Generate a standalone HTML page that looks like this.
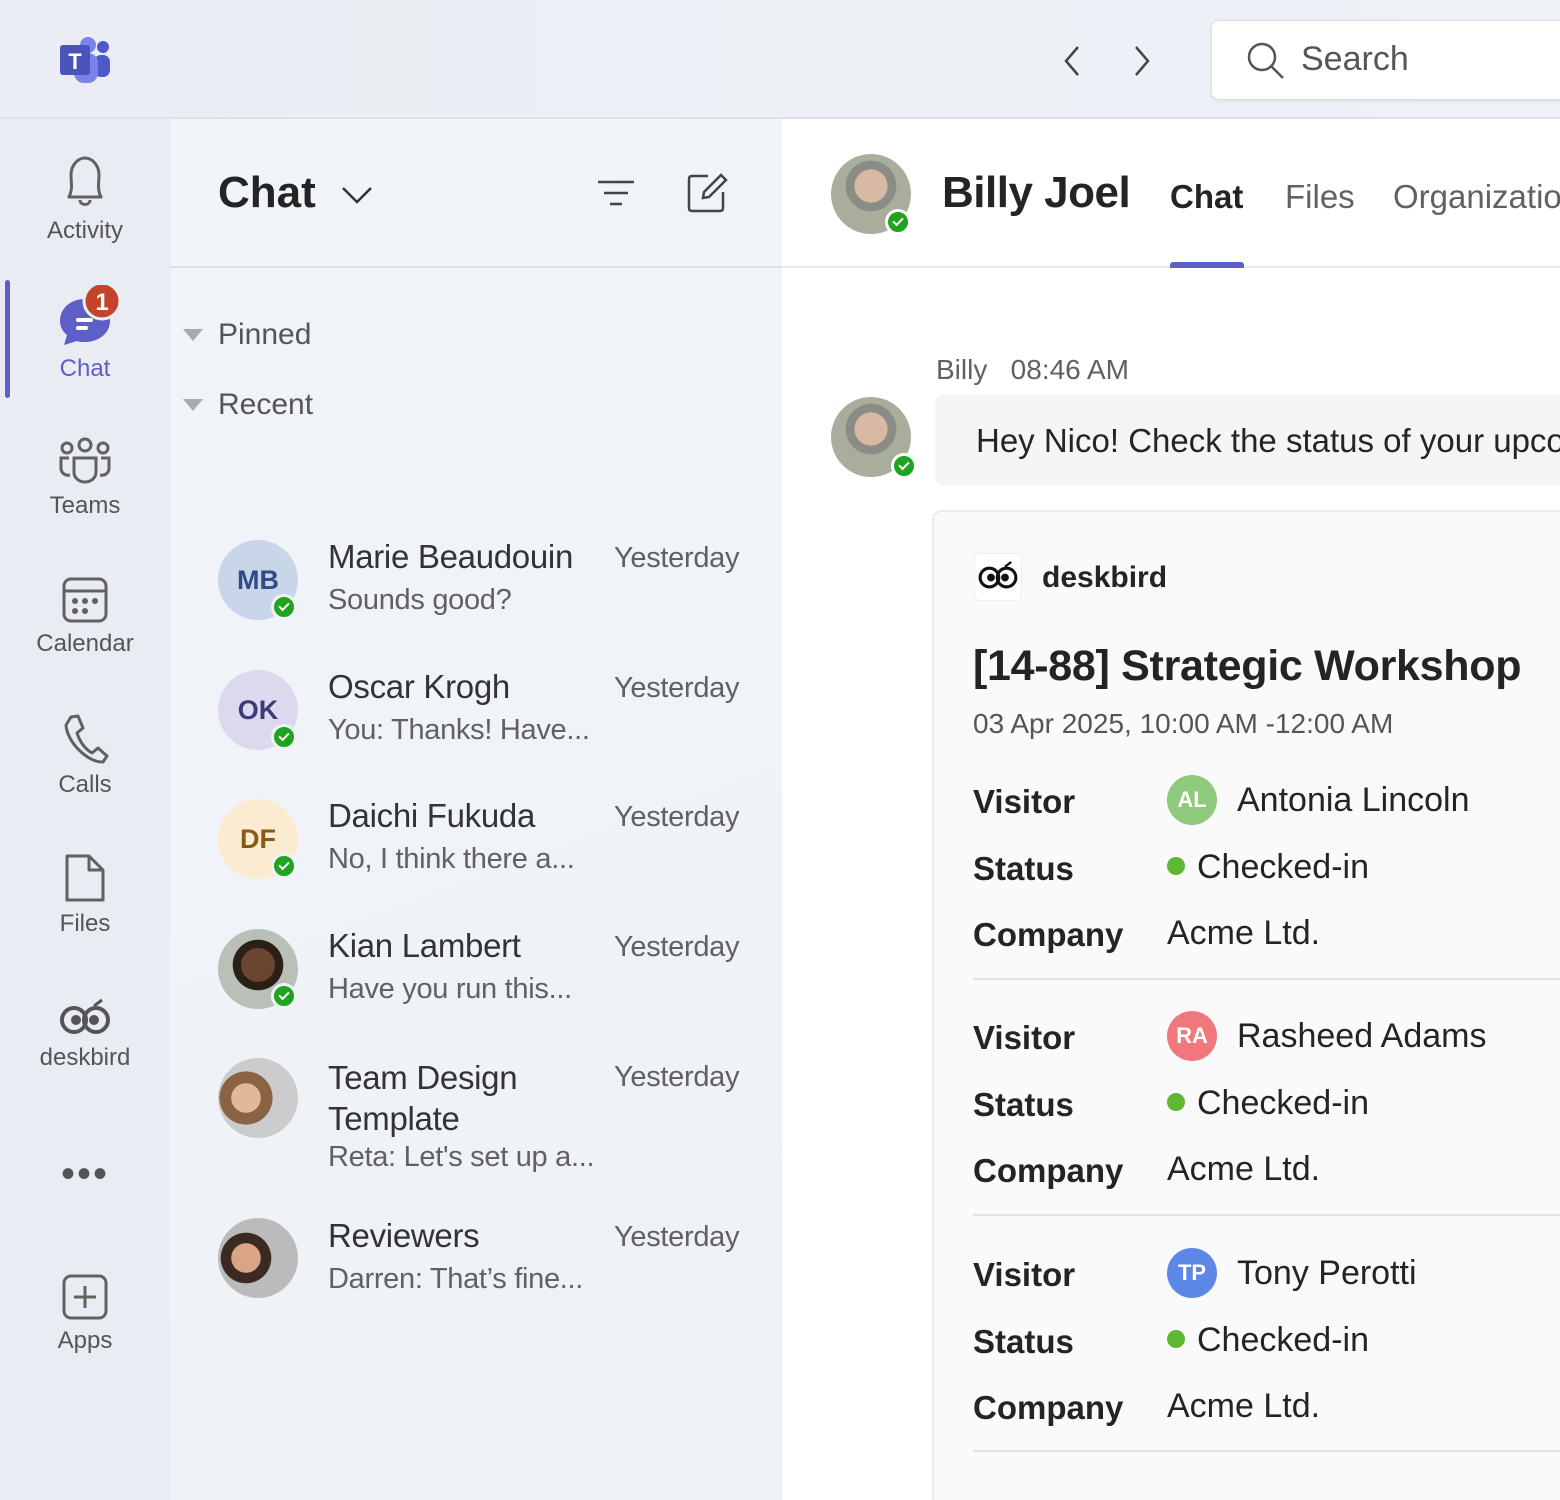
<!DOCTYPE html>
<html><head><meta charset="utf-8"><style>
*{box-sizing:border-box;margin:0;padding:0}
html,body{width:1560px;height:1500px;overflow:hidden}
body{font-family:"Segoe UI","Liberation Sans",sans-serif;background:#eef1f6;color:#242424}
#w{position:relative;width:1560px;height:1500px;overflow:hidden}
.abs{position:absolute}
.top{left:0;top:0;width:1560px;height:119px;background:linear-gradient(90deg,#eaeef4,#eef1f6);border-bottom:2px solid #dde1e8}
.rail{left:0;top:119px;width:170px;height:1381px;background:#e9edf3}
.list{left:170px;top:119px;width:612px;height:1381px;background:linear-gradient(160deg,#f1f4f8,#eef2f7)}
.main{left:782px;top:119px;width:778px;height:1381px;background:#fff}
.ri{position:absolute;left:0;width:170px;text-align:center;font-size:24px;color:#555}
.ri svg{display:block;margin:0 auto 6px}
.av{position:absolute;width:80px;height:80px;border-radius:50%;font-size:27px;font-weight:700;display:flex;align-items:center;justify-content:center}
.ok{position:absolute;width:26px;height:26px;border-radius:50%;background:#1ea41e;border:3px solid #f0f3f8;display:flex;align-items:center;justify-content:center}
.ok:after{content:"";width:8px;height:4px;border-left:2px solid #fff;border-bottom:2px solid #fff;transform:rotate(-45deg) translate(1px,-1px)}
.nm{position:absolute;left:328px;font-size:33px;color:#333;letter-spacing:-.3px}
.pv{position:absolute;left:328px;font-size:29px;color:#616161;letter-spacing:-.3px}
.yd{position:absolute;left:614px;font-size:29px;color:#616161;letter-spacing:-.3px}
.lb{position:absolute;left:973px;font-size:33px;font-weight:700;color:#242424}
.vl{position:absolute;font-size:34px;color:#242424}
.ini{position:absolute;left:1167px;width:50px;height:50px;border-radius:50%;color:#fff;font-size:22px;font-weight:700;display:flex;align-items:center;justify-content:center}
.dot{display:inline-block;width:18px;height:18px;border-radius:50%;background:#5fb832;margin-right:12px;vertical-align:middle;position:relative;top:-3px}
.hr{position:absolute;left:973px;width:587px;height:2px;background:#e3e3e3}
.face{position:absolute;width:80px;height:80px;border-radius:50%;background:radial-gradient(circle at 50% 40%,#d8b9a3 0 26%,#8c8c86 27% 40%,#a8ad9c 41%)}
</style></head><body><div id="w">
<div class="abs top"></div>
<svg class="abs" style="left:58px;top:37px" width="54" height="48" viewBox="0 0 54 48"><circle cx="30" cy="8" r="8" fill="#7b83eb"/><circle cx="45" cy="10" r="6" fill="#5059c9"/><rect x="36" y="18" width="16" height="22" rx="7" fill="#5059c9"/><rect x="16" y="16" width="24" height="30" rx="10" fill="#7b83eb"/><rect x="2" y="8" width="30" height="30" rx="3" fill="#4b53bc"/><text x="17" y="32" font-size="22" font-weight="700" fill="#fff" text-anchor="middle" font-family="Liberation Sans">T</text></svg>
<svg class="abs" style="left:1058px;top:44px" width="100" height="34"><path d="M20 3 L8 17 L20 31" fill="none" stroke="#444" stroke-width="2.5"/><path d="M78 3 L90 17 L78 31" fill="none" stroke="#444" stroke-width="2.5"/></svg>
<div class="abs" style="left:1211px;top:20px;width:349px;height:80px;background:#fff;border-radius:8px 0 0 8px;border:1px solid #e0e0e0;border-right:none;box-shadow:0 1px 3px rgba(0,0,0,.08)"></div>
<svg class="abs" style="left:1246px;top:41px" width="40" height="40"><circle cx="16" cy="16" r="13" fill="none" stroke="#555" stroke-width="2.5"/><path d="M26 26 L37 37" stroke="#555" stroke-width="2.5"/></svg>
<div class="abs" style="left:1301px;top:40px;font-size:34px;color:#555">Search</div>

<div class="abs rail"></div>
<div class="abs" style="left:5px;top:280px;width:5px;height:118px;background:#5b5fc7;border-radius:3px"></div>
<div class="ri" style="top:155px"><svg width="48" height="56" viewBox="0 0 48 56"><path d="M8 42 C12 34 10 28 10 20 C10 10 17 3 24 3 C31 3 38 10 38 20 C38 28 36 34 40 42 Z M19 45 C19 51 29 51 29 45" fill="none" stroke="#616161" stroke-width="3" stroke-linejoin="round"/></svg>Activity</div>
<div class="ri" style="top:285px;color:#5b5fc7"><svg width="70" height="64" viewBox="0 0 70 64"><path d="M35 14 C21 14 10 23 10 36 C10 42 13 47 17 50 L14 60 L27 56 C29 57 32 57 35 57 C49 57 60 48 60 36 C60 23 49 14 35 14Z" fill="#5b5fc7"/><rect x="26" y="33" width="17" height="4" rx="2" fill="#fff"/><rect x="26" y="41" width="12" height="4" rx="2" fill="#fff"/><circle cx="52" cy="16" r="18" fill="#c4432b" stroke="#e9edf3" stroke-width="3"/><text x="52" y="25" font-size="24" font-weight="700" fill="#fff" text-anchor="middle" font-family="Liberation Sans">1</text></svg>Chat</div>
<div class="ri" style="top:436px"><svg width="56" height="50" viewBox="0 0 56 50"><g fill="none" stroke="#616161" stroke-width="3"><circle cx="28" cy="9" r="6"/><circle cx="10" cy="12" r="5"/><circle cx="46" cy="12" r="5"/><path d="M17 22 H39 V36 C39 42 34 46 28 46 C22 46 17 42 17 36Z"/><path d="M12 22 H4 V32 C4 37 8 40 13 39"/><path d="M44 22 H52 V32 C52 37 48 40 43 39"/></g></svg>Teams</div>
<div class="ri" style="top:576px"><svg width="48" height="48" viewBox="0 0 48 48"><rect x="3" y="3" width="42" height="42" rx="7" fill="none" stroke="#616161" stroke-width="3"/><path d="M3 15 H45" stroke="#616161" stroke-width="3"/><g fill="#616161"><circle cx="14" cy="25" r="3"/><circle cx="24" cy="25" r="3"/><circle cx="34" cy="25" r="3"/><circle cx="14" cy="35" r="3"/><circle cx="24" cy="35" r="3"/></g></svg>Calendar</div>
<div class="ri" style="top:713px"><svg width="48" height="52" viewBox="0 0 48 52"><path d="M10 4 L17 3 L22 15 L16 20 C19 29 24 36 31 40 L37 35 L46 43 L42 49 C28 50 6 30 5 12Z" fill="none" stroke="#616161" stroke-width="3" stroke-linejoin="round"/></svg>Calls</div>
<div class="ri" style="top:852px"><svg width="44" height="52" viewBox="0 0 44 52"><path d="M4 4 H26 L40 18 V48 H4Z M26 4 V18 H40" fill="none" stroke="#616161" stroke-width="3" stroke-linejoin="round"/></svg>Files</div>
<div class="ri" style="top:998px"><svg width="54" height="40" viewBox="0 0 54 40"><circle cx="16" cy="22" r="12" fill="none" stroke="#555" stroke-width="4"/><circle cx="38" cy="22" r="12" fill="none" stroke="#555" stroke-width="4"/><circle cx="18" cy="22" r="5" fill="#555"/><circle cx="36" cy="22" r="5" fill="#555"/><path d="M36 8 L44 2" stroke="#555" stroke-width="3"/></svg>deskbird</div>
<div class="ri" style="top:1152px;font-size:40px;letter-spacing:2px;color:#555">•••</div>
<div class="ri" style="top:1273px"><svg width="48" height="48" viewBox="0 0 48 48"><rect x="3" y="3" width="42" height="42" rx="7" fill="none" stroke="#616161" stroke-width="3"/><path d="M24 13 V35 M13 24 H35" stroke="#616161" stroke-width="3"/></svg>Apps</div>

<div class="abs list"></div>
<div class="abs" style="left:170px;top:266px;width:612px;height:2px;background:#dde1e8"></div>
<div class="abs" style="left:218px;top:168px;font-size:44px;font-weight:700;color:#242424">Chat</div>
<svg class="abs" style="left:340px;top:184px" width="34" height="22"><path d="M3 4 L17 18 L31 4" fill="none" stroke="#333" stroke-width="2.5"/></svg>
<svg class="abs" style="left:596px;top:178px" width="40" height="30"><path d="M2 4 H38 M8 15 H32 M14 26 H26" stroke="#444" stroke-width="2.5"/></svg>
<svg class="abs" style="left:686px;top:172px" width="42" height="42"><path d="M22 4 H6 Q3 4 3 7 V36 Q3 39 6 39 H34 Q37 39 37 36 V20" fill="none" stroke="#444" stroke-width="2.5"/><path d="M17 26 L18 20 L35 3 L40 8 L23 25Z" fill="none" stroke="#444" stroke-width="2.5"/></svg>
<svg class="abs" style="left:183px;top:329px" width="22" height="14"><path d="M0 0 H20 L10 12Z" fill="#aaa"/></svg>
<div class="abs" style="left:218px;top:318px;font-size:30px;color:#555">Pinned</div>
<svg class="abs" style="left:183px;top:399px" width="22" height="14"><path d="M0 0 H20 L10 12Z" fill="#aaa"/></svg>
<div class="abs" style="left:218px;top:388px;font-size:30px;color:#555">Recent</div>

<div class="av" style="left:218px;top:540px;background:#c9d6ea;color:#2f4c85">MB</div><div class="ok" style="left:271px;top:594px"></div>
<div class="nm" style="top:538px">Marie Beaudouin</div><div class="yd" style="top:542px">Yesterday</div><div class="pv" style="top:584px">Sounds good?</div>
<div class="av" style="left:218px;top:670px;background:#dcd9ee;color:#3d3a7a">OK</div><div class="ok" style="left:271px;top:724px"></div>
<div class="nm" style="top:668px">Oscar Krogh</div><div class="yd" style="top:672px">Yesterday</div><div class="pv" style="top:714px">You: Thanks! Have...</div>
<div class="av" style="left:218px;top:799px;background:#fbecd1;color:#8a5a14">DF</div><div class="ok" style="left:271px;top:853px"></div>
<div class="nm" style="top:797px">Daichi Fukuda</div><div class="yd" style="top:801px">Yesterday</div><div class="pv" style="top:843px">No, I think there a...</div>
<div class="face" style="left:218px;top:929px;background:radial-gradient(circle at 50% 45%,#6b4530 0 28%,#2a2018 29% 42%,#b9c0b7 43%)"></div><div class="ok" style="left:271px;top:983px"></div>
<div class="nm" style="top:927px">Kian Lambert</div><div class="yd" style="top:931px">Yesterday</div><div class="pv" style="top:973px">Have you run this...</div>
<div class="face" style="left:218px;top:1058px;background:radial-gradient(circle at 35% 50%,#e2b89a 0 22%,#8a6244 23% 40%,#ccc 41%)"></div>
<div class="nm" style="top:1057px;line-height:41px">Team Design<br>Template</div><div class="yd" style="top:1061px">Yesterday</div><div class="pv" style="top:1141px">Reta: Let's set up a...</div>
<div class="face" style="left:218px;top:1218px;background:radial-gradient(circle at 35% 50%,#d9a585 0 22%,#3a2a22 23% 38%,#bbb 39%)"></div>
<div class="nm" style="top:1217px">Reviewers</div><div class="yd" style="top:1221px">Yesterday</div><div class="pv" style="top:1263px">Darren: That’s fine...</div>

<div class="abs main"></div>
<div class="abs" style="left:782px;top:266px;width:778px;height:2px;background:#ebebeb"></div>
<div class="face" style="left:831px;top:154px"></div><div class="ok" style="left:885px;top:209px;border-color:#fff"></div>
<div class="abs" style="left:942px;top:168px;font-size:44px;font-weight:700;letter-spacing:-.5px">Billy Joel</div>
<div class="abs" style="left:1170px;top:178px;font-size:33px;font-weight:600">Chat</div>
<div class="abs" style="left:1170px;top:262px;width:74px;height:6px;background:#5b5fc7;border-radius:3px 3px 0 0"></div>
<div class="abs" style="left:1285px;top:178px;font-size:33px;color:#616161">Files</div>
<div class="abs" style="left:1393px;top:178px;font-size:33px;color:#616161;white-space:nowrap">Organization</div>
<div class="abs" style="left:936px;top:354px;font-size:28px;color:#616161">Billy&nbsp;&nbsp; 08:46 AM</div>
<div class="face" style="left:831px;top:397px"></div><div class="ok" style="left:891px;top:453px;border-color:#fff"></div>
<div class="abs" style="left:935px;top:394px;width:625px;height:91px;background:#f5f5f5;border-radius:8px 0 0 8px"></div>
<div class="abs" style="left:976px;top:422px;font-size:33px;white-space:nowrap">Hey Nico! Check the status of your upcoming</div>
<div class="abs" style="left:932px;top:510px;width:628px;height:990px;background:#fafafa;border:2px solid #ececec;border-right:none;border-bottom:none;border-radius:10px 0 0 0"></div>
<div class="abs" style="left:974px;top:553px;width:48px;height:48px;background:#fff;border-radius:6px;border:1px solid #eee"></div>
<svg class="abs" style="left:977px;top:560px" width="42" height="32" viewBox="0 0 54 40"><circle cx="16" cy="22" r="12" fill="none" stroke="#111" stroke-width="4"/><circle cx="38" cy="22" r="12" fill="none" stroke="#111" stroke-width="4"/><circle cx="18" cy="22" r="5" fill="#111"/><circle cx="36" cy="22" r="5" fill="#111"/><path d="M36 8 L44 2" stroke="#111" stroke-width="3"/></svg>
<div class="abs" style="left:1042px;top:561px;font-size:30px;font-weight:600">deskbird</div>
<div class="abs" style="left:973px;top:642px;font-size:43px;font-weight:600;white-space:nowrap;letter-spacing:-.3px">[14-88] Strategic Workshop</div>
<div class="abs" style="left:973px;top:708px;font-size:28px;color:#555">03 Apr 2025, 10:00 AM -12:00 AM</div>

<div class="lb" style="top:783px">Visitor</div><div class="ini" style="top:775px;background:#8fc97e">AL</div><div class="vl" style="left:1237px;top:781px">Antonia Lincoln</div>
<div class="lb" style="top:850px">Status</div><div class="vl" style="left:1167px;top:848px"><span class="dot"></span>Checked-in</div>
<div class="lb" style="top:916px">Company</div><div class="vl" style="left:1167px;top:914px">Acme Ltd.</div>
<div class="hr" style="top:978px"></div>
<div class="lb" style="top:1019px">Visitor</div><div class="ini" style="top:1011px;background:#f0787c">RA</div><div class="vl" style="left:1237px;top:1017px">Rasheed Adams</div>
<div class="lb" style="top:1086px">Status</div><div class="vl" style="left:1167px;top:1084px"><span class="dot"></span>Checked-in</div>
<div class="lb" style="top:1152px">Company</div><div class="vl" style="left:1167px;top:1150px">Acme Ltd.</div>
<div class="hr" style="top:1214px"></div>
<div class="lb" style="top:1256px">Visitor</div><div class="ini" style="top:1248px;background:#5d87e6">TP</div><div class="vl" style="left:1237px;top:1254px">Tony Perotti</div>
<div class="lb" style="top:1323px">Status</div><div class="vl" style="left:1167px;top:1321px"><span class="dot"></span>Checked-in</div>
<div class="lb" style="top:1389px">Company</div><div class="vl" style="left:1167px;top:1387px">Acme Ltd.</div>
<div class="hr" style="top:1450px"></div>
</div></body></html>
